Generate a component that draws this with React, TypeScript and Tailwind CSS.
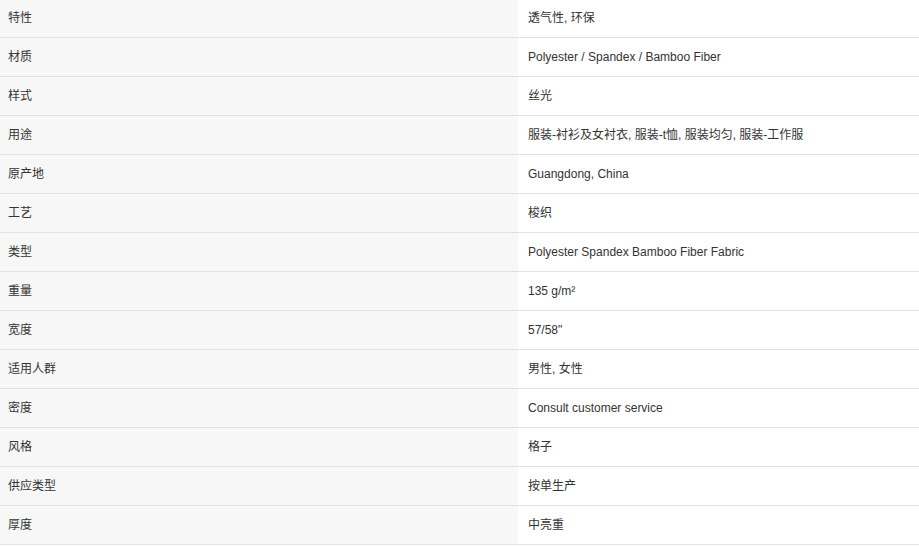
const ROWS: [string, string][] = [
  ['特性', '透气性, 环保'],
  ['材质', 'Polyester / Spandex / Bamboo Fiber'],
  ['样式', '丝光'],
  ['用途', '服装-衬衫及女衬衣, 服装-t恤, 服装均匀, 服装-工作服'],
  ['原产地', 'Guangdong, China'],
  ['工艺', '梭织'],
  ['类型', 'Polyester Spandex Bamboo Fiber Fabric'],
  ['重量', '135 g/m²'],
  ['宽度', '57/58"'],
  ['适用人群', '男性, 女性'],
  ['密度', 'Consult customer service'],
  ['风格', '格子'],
  ['供应类型', '按单生产'],
  ['厚度', '中亮重'],
];

export default function App() {
  return (
    <div
      className="h-[546px] w-[919px] overflow-hidden bg-white text-[12px] text-[#333]"
      style={{ fontFamily: '"Liberation Sans", Arial, "Noto Sans CJK SC", sans-serif' }}
    >
      <div className="-mt-px flex flex-col">
        {ROWS.map(([label, value]) => (
          <div key={label} className="flex h-[39px] border-b border-[#e2e2e2]">
            <div className="flex w-[518px] shrink-0 items-center bg-[#f7f7f7] pl-[8px]">
              {label}
            </div>
            <div className="flex flex-1 items-center pl-[10px]">{value}</div>
          </div>
        ))}
      </div>
    </div>
  );
}
